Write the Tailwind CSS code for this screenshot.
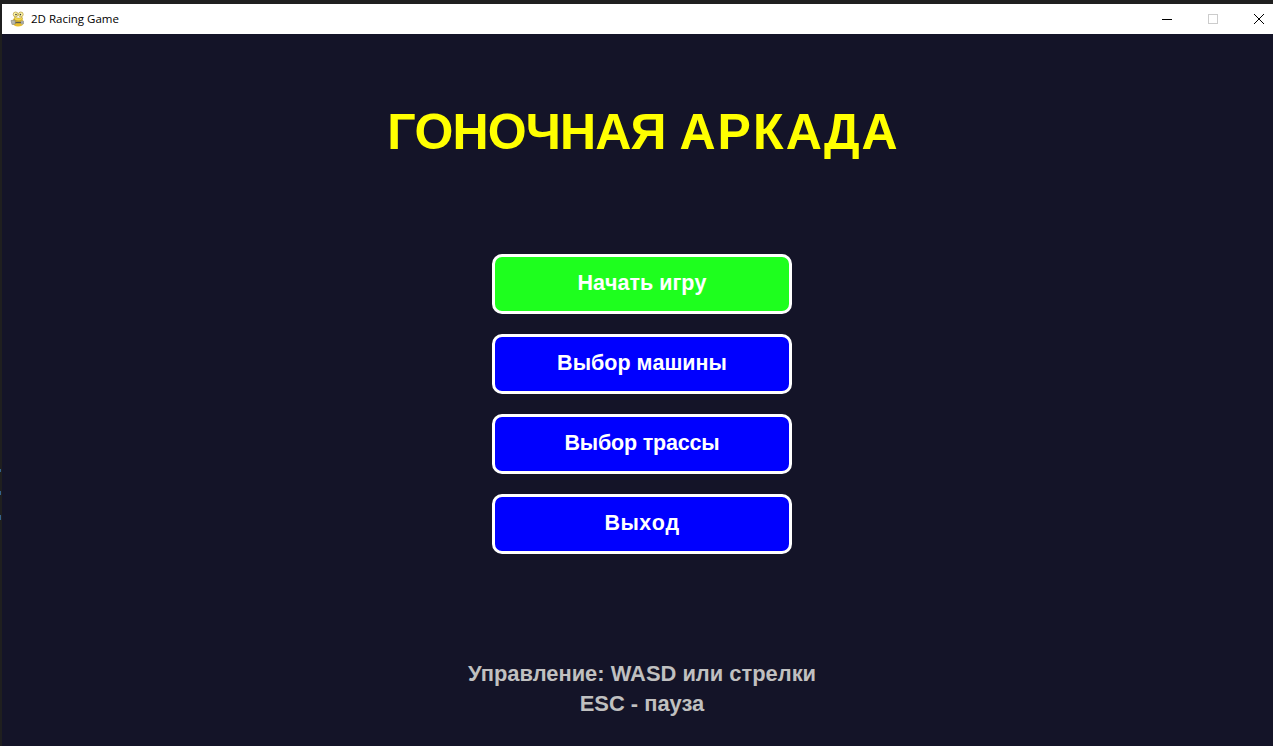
<!DOCTYPE html>
<html lang="ru">
<head>
<meta charset="utf-8">
<script src="https://cdn.jsdelivr.net/npm/@tailwindcss/browser@4"></script>
</head>
<body class="relative h-[746px] w-[1273px] overflow-hidden bg-[#1f1f1f] font-['Liberation_Sans',Arial,sans-serif]">
<div class="flex h-[746px] flex-col pt-[4px]">
  <div class="ml-[2px] flex h-[30px] w-[1271px] shrink-0 items-center bg-white">
    <svg class="ml-[8px] h-[16px] w-[16px]" viewBox="0 0 16 16">
      <path d="M4 7.500C3 8.500 2 9.500 2.500 12c.5 2 2.500 3.500 5.500 3.500s5-1 5.500-3c.5-2-.5-3.500-1.500-5z" fill="#e8bd2c"/>
      <path d="M5 5.500c1 2 5.500 2 7 .5l.5 2c-2 2.500-6.500 2.500-8.500 0z" fill="#f5d94a" stroke="#a98a1c" stroke-width=".5"/>
      <circle cx="5.600" cy="3.400" r="2.400" fill="#fbf3a8" stroke="#a98a1c" stroke-width=".6"/>
      <circle cx="10.800" cy="3.400" r="2.400" fill="#fbf3a8" stroke="#a98a1c" stroke-width=".6"/>
      <circle cx="6" cy="3.600" r=".8" fill="#333"/>
      <circle cx="10.400" cy="3.600" r=".8" fill="#333"/>
      <path d="M1 9.500l4-.5.5 4-3.500.5z" fill="#b8b8b0" stroke="#77776f" stroke-width=".5"/>
      <path d="M5.500 11.500h6" stroke="#5c5c50" stroke-width="1.400"/>
      <path d="M11 9.500l3 .5v3l-3 .5z" fill="#a8a8a0"/>
    </svg>
    <span class="ml-[5px] font-['Open_Sans',sans-serif] text-[11.500px] leading-none text-black">2D Racing Game</span>
    <div class="ml-auto flex items-center">
      <svg class="h-[12px] w-[12px]" viewBox="0 0 12 12"><path d="M1 6.500h10" stroke="#000" stroke-width="1"/></svg>
      <svg class="ml-[34px] h-[12px] w-[12px]" viewBox="0 0 12 12"><rect x="1.500" y="1.500" width="9" height="9" fill="none" stroke="#ccc" stroke-width="1"/></svg>
      <svg class="mr-[8px] ml-[34px] h-[12px] w-[12px]" viewBox="0 0 12 12"><path d="M1 1l10 10M11 1L1 11" stroke="#000" stroke-width="1"/></svg>
    </div>
  </div>
  <main class="ml-[2px] flex h-[712px] w-[1280px] flex-col items-center bg-[#141428]">
    <h1 class="mt-[68px] ml-[3px] text-[50px] leading-[60px] font-bold text-[#ffff00] [font-kerning:none]"><span class="tracking-[-0.9px]">ГОНОЧНАЯ</span> <span class="tracking-[2.1px]">АРКАДА</span></h1>
    <div class="mt-[92px] flex flex-col gap-[20px] [font-kerning:none]">
      <div class="flex h-[60px] w-[300px] items-center justify-center rounded-[10px] border-[3px] border-white bg-[#1eff1e] pb-[1px] text-[21.500px] font-bold text-white">Начать игру</div>
      <div class="flex h-[60px] w-[300px] items-center justify-center rounded-[10px] border-[3px] border-white bg-[#0000ff] pb-[1px] text-[21.500px] font-bold text-white">Выбор машины</div>
      <div class="flex h-[60px] w-[300px] items-center justify-center rounded-[10px] border-[3px] border-white bg-[#0000ff] pb-[1px] text-[21.500px] tracking-[-0.2px] font-bold text-white">Выбор трассы</div>
      <div class="flex h-[60px] w-[300px] items-center justify-center rounded-[10px] border-[3px] border-white bg-[#0000ff] pb-[1px] text-[21.500px] tracking-[0.5px] font-bold text-white">Выход</div>
    </div>
    <div class="mt-[105px] text-center text-[21.900px] leading-[30px] font-bold text-[#c0c0c0]">
      <p>Управление: WASD или стрелки</p>
      <p>ESC - пауза</p>
    </div>
  </main>
</div>
<span class="absolute top-[469px] left-0 h-[3px] w-[1px] bg-[#3f7fb8]/70"></span>
<span class="absolute top-[491px] left-0 h-[4px] w-[1px] bg-[#3f7fb8]/70"></span>
<span class="absolute top-[515px] left-0 h-[5px] w-[1px] bg-[#3f7fb8]/70"></span>
</body>
</html>
